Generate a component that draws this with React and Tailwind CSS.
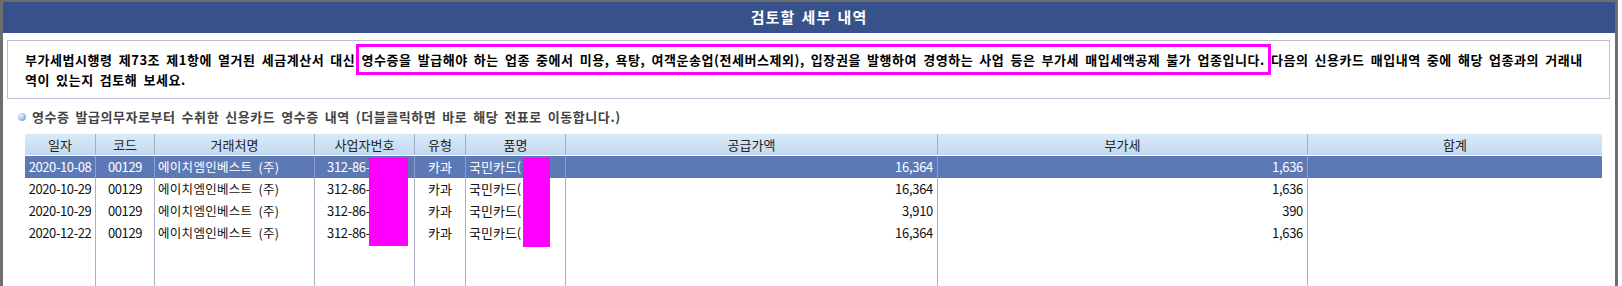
import React from "react";

const FONT = "font-['Noto_Sans_CJK_KR','Noto_Sans',sans-serif]";

const rows = [
  { date: "2020-10-08", code: "00129", name: "에이치엠인베스트 (주)", biz: "312-86-", type: "카과", item: "국민카드(", amt: "16,364", vat: "1,636", sel: true },
  { date: "2020-10-29", code: "00129", name: "에이치엠인베스트 (주)", biz: "312-86-", type: "카과", item: "국민카드(", amt: "16,364", vat: "1,636" },
  { date: "2020-10-29", code: "00129", name: "에이치엠인베스트 (주)", biz: "312-86-", type: "카과", item: "국민카드(", amt: "3,910", vat: "390" },
  { date: "2020-12-22", code: "00129", name: "에이치엠인베스트 (주)", biz: "312-86-", type: "카과", item: "국민카드(", amt: "16,364", vat: "1,636" },
];

const COLS = "grid grid-cols-[70px_59px_160px_100px_51px_100px_372px_370px_295px]";

function Row({ r }) {
  const base = r.sel ? "bg-[#5c79b5] text-white" : "bg-white text-[#111]";
  const line = r.sel ? "border-l border-[#8a9fca]" : "border-l border-[#a8b2c4]";
  return (
    <div className={`${COLS} h-[22px] text-[13px] leading-[22px] ${base}`}>
      <div className="text-center tracking-[-0.4px]">{r.date}</div>
      <div className={`${line} text-center tracking-[-0.4px]`}>{r.code}</div>
      <div className={`${line} pl-[3px] whitespace-nowrap text-[12.5px] tracking-[0.3px] [word-spacing:3px]`}>{r.name}</div>
      <div className={`${line} pl-[12px] tracking-[-0.3px] whitespace-nowrap`}>{r.biz}</div>
      <div className={`${line} text-center`}>{r.type}</div>
      <div className={`${line} pl-[3px] whitespace-nowrap flex`}>
        <span>{r.item}</span>
        <span className="inline-block w-[24px]" />
        <span>)</span>
      </div>
      <div className={`${line} text-right pr-[4px] tracking-[-0.3px]`}>{r.amt}</div>
      <div className={`${line} text-right pr-[4px] tracking-[-0.3px]`}>{r.vat}</div>
      <div className={line} />
    </div>
  );
}

export default function App() {
  const headers = ["일자", "코드", "거래처명", "사업자번호", "유형", "품명", "공급가액", "부가세", "합계"];
  return (
    <div className={`${FONT} w-[1618px] h-[286px] overflow-hidden bg-white border-t-2 border-l-[3px] border-r-[3px] border-[#6e6e6e] flex flex-col`}>
      <div className="h-[31px] shrink-0 bg-[#37528a] flex items-center justify-center text-white text-[15px] font-bold tracking-[1px] [word-spacing:2px]">
        검토할 세부 내역
      </div>

      <div className="ml-[4px] mr-[5px] mt-[7px] h-[59px] shrink-0 border border-[#b7c0d4] pl-[17px] pt-[9px] text-[13px] leading-[20px] font-bold text-black whitespace-nowrap tracking-[0.55px] [word-spacing:2.6px]">
        <div>
          부가세법시행령 제73조 제1항에 열거된 세금계산서 대신{" "}
          <span className="outline-[3px] outline-solid outline-[#ff00ff] outline-offset-[3px]">
            영수증을 발급해야 하는 업종 중에서 미용, 욕탕, 여객운송업(전세버스제외), 입장권을 발행하여 경영하는 사업 등은 부가세 매입세액공제 불가 업종입니다.
          </span>{" "}
          다음의 신용카드 매입내역 중에 해당 업종과의 거래내
        </div>
        <div>역이 있는지 검토해 보세요.</div>
      </div>

      <div className="mt-[10px] h-[16px] shrink-0 pl-[15px] flex items-center gap-[6px] text-[13px] font-bold text-[#444] tracking-[0.55px] [word-spacing:2.5px]">
        <span className="inline-block w-[8px] h-[8px] rounded-full bg-[radial-gradient(circle_at_35%_35%,#eef5fd_0%,#9dbde6_55%,#5f8fcf_100%)]" />
        <span>영수증 발급의무자로부터 수취한 신용카드 영수증 내역 (더블클릭하면 바로 해당 전표로 이동합니다.)</span>
      </div>

      <div className="relative ml-[22px] mt-[9px] w-[1577px] flex-1 flex flex-col">
        <div className={`${COLS} h-[21px] text-[13px] leading-[21px] text-[#222] bg-gradient-to-b from-[#d9ebf8] to-[#c3d8ee]`}>
          {headers.map((h, i) => (
            <div key={h} className={`text-center ${i > 0 ? "border-l border-[#a5b0c4]" : ""}`}>{h}</div>
          ))}
        </div>
        <div className="h-[1px] bg-white" />
        {rows.map((r, i) => (
          <Row key={i} r={r} />
        ))}
        <div className={`${COLS} flex-1`}>
          {headers.map((h, i) => (
            <div key={h} className={i > 0 ? "border-l border-[#a8b2c4]" : ""} />
          ))}
        </div>

        <div className="absolute left-[344px] top-[24px] w-[39px] h-[88px] bg-[#ff00ff]" />
        <div className="absolute left-[498px] top-[24px] w-[27px] h-[89px] bg-[#ff00ff]" />
      </div>
    </div>
  );
}
